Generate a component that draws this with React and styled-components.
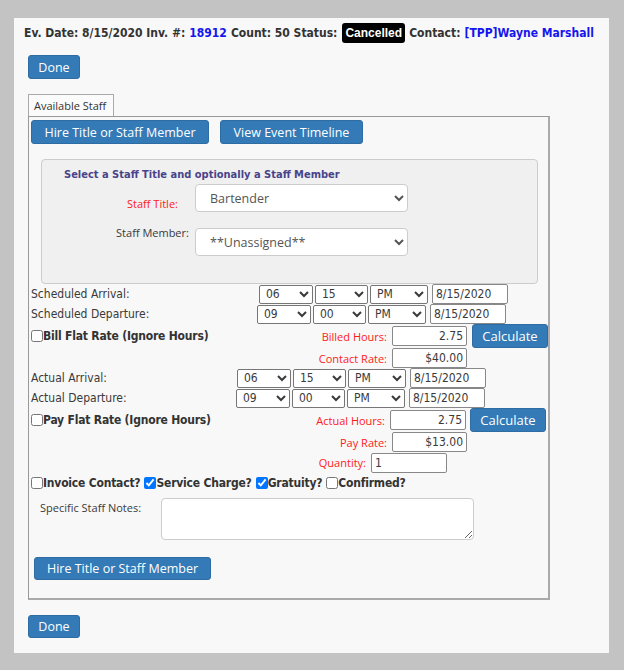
import React from 'react'
import styled, { createGlobalStyle } from 'styled-components'

const GlobalStyle = createGlobalStyle`
  html, body {
    margin: 0;
    padding: 0;
    background: #c3c3c3;
  }
  body {
    font-family: "DejaVu Sans Condensed", "DejaVu Sans", sans-serif;
    font-size: 12px;
    color: #3a3a3a;
  }
`

const Page = styled.div`
  margin: 18px 15px 18px 14px;
  background: #f8f8f8;
  padding: 8px 14px 14px 14px;
`

const Header = styled.div`
  font-weight: bold;
  color: #333;
  font-size: 12px;
  height: 14px;
  line-height: 14px;
  margin-left: -4px;
  display: flex;
  align-items: center;
  white-space: nowrap;
`

const LinkText = styled.a`
  color: #1515ee;
  text-decoration: none;
  margin: 0 4px;
`

const StatusBadge = styled.span`
  background: #000;
  color: #fff;
  border-radius: 3px;
  padding: 3px 3px;
  margin: 0 4px 0 5px;
  font-family: "Liberation Sans", Arial, sans-serif;
  font-size: 12px;
`

const Button = styled.button`
  background: #337ab7;
  border: 1px solid #2e6da4;
  border-radius: 3px;
  color: #fff;
  font-family: "Open Sans", sans-serif;
  font-size: ${({ $size }) => $size || 12.5}px;
  height: ${({ $h }) => $h || 24}px;
  width: ${({ $w }) => ($w ? `${$w}px` : 'auto')};
  margin-left: ${({ $ml }) => $ml || 0}px;
  padding: 0;
  cursor: pointer;
  flex: none;
`

const DoneRow = styled.div`
  margin-top: ${({ $top }) => $top}px;
  height: 24px;
`

const Tab = styled.div`
  margin-top: 15px;
  width: 86px;
  height: 22px;
  box-sizing: border-box;
  border: 1px solid #aaa;
  border-bottom: none;
  background: #fbfbfb;
  font-family: "Open Sans", sans-serif;
  font-size: 11px;
  line-height: 21px;
  padding-left: 5px;
  color: #333;
`

const TabPanel = styled.div`
  width: 522px;
  box-sizing: border-box;
  border: 1px solid #999;
  border-right: 2px solid #aaa;
  border-bottom: 2px solid #aaa;
  padding: 3px 2px 18px 2px;
`

const ButtonBar = styled.div`
  display: flex;
  gap: 11px;
`

const StaffBox = styled.div`
  margin: 15px 0 0 10px;
  width: 497px;
  height: 125px;
  box-sizing: border-box;
  background: #f0f0f0;
  border: 1px solid #ccc;
  border-radius: 4px;
  padding: 8px 0 0 0;
`

const BoxTitle = styled.div`
  font-weight: bold;
  color: #48448a;
  font-size: 11px;
  padding-left: 22px;
  height: 14px;
`

const BoxRow = styled.div`
  display: flex;
  align-items: flex-start;
  margin-top: ${({ $top }) => $top}px;
  padding-left: 70px;
`

const BoxLabel = styled.div`
  width: 81px;
  text-align: center;
  margin-right: 2px;
  margin-top: ${({ $mt }) => $mt}px;
  line-height: 14px;
  font-family: "Open Sans", sans-serif;
  font-size: 11px;
  color: ${({ $red }) => ($red ? '#ff1a1a' : '#3a3a3a')};
`

const BigSelect = styled.select`
  width: 213px;
  height: 28px;
  border: 1px solid #ccc;
  border-radius: 4px;
  background: #fff;
  padding: 0 10px;
  font-family: "Open Sans", sans-serif;
  font-size: 12.5px;
  color: #555;
`

const Row = styled.div`
  display: flex;
  align-items: center;
  height: ${({ $h }) => $h || 20}px;
`

const Cell = styled.div`
  width: ${({ $w }) => $w}px;
  flex: none;
  display: flex;
  align-items: center;
  justify-content: ${({ $justify }) => $justify || 'flex-start'};
  white-space: nowrap;
  color: #3a3a3a;
`

const RedLabel = styled.span`
  color: #ff1a1a;
  font-family: "Open Sans", sans-serif;
  font-size: 11px;
`

const CheckLabel = styled.label`
  display: flex;
  align-items: center;
  font-weight: bold;
  font-size: 12px;
  letter-spacing: -0.2px;
  color: #333;
  white-space: nowrap;
  margin-right: ${({ $mr }) => $mr || 0}px;
`

const Check = styled.input.attrs({ type: 'checkbox' })`
  margin: 0;
  width: 12px;
  height: 12px;
`

const TimeSelect = styled.select`
  width: ${({ $w }) => $w}px;
  height: 19px;
  margin-right: ${({ $mr }) => $mr}px;
  border: 1px solid #767676;
  border-radius: 2px;
  background: #fff;
  padding: 0 0 0 2px;
  font-family: "DejaVu Sans Condensed", "DejaVu Sans", sans-serif;
  font-size: 12px;
  color: #3a3a3a;
`

const TextBox = styled.input`
  width: ${({ $w }) => $w || 76}px;
  height: 20px;
  box-sizing: border-box;
  border: 1px solid #888;
  border-radius: 2px;
  background: #fff;
  padding: 0 3px;
  font-family: "DejaVu Sans Condensed", "DejaVu Sans", sans-serif;
  font-size: 12px;
  color: #3a3a3a;
  text-align: ${({ $right }) => ($right ? 'right' : 'left')};
  margin-left: ${({ $ml }) => $ml || 0}px;
`

const NotesRow = styled.div`
  display: flex;
  margin-top: 5px;
`

const NotesLabel = styled.div`
  width: 121px;
  flex: none;
  padding: 2px 0 0 9px;
  font-family: "Open Sans", sans-serif;
  font-size: 11px;
  color: #3a3a3a;
`

const Notes = styled.textarea`
  width: 313px;
  height: 42px;
  box-sizing: border-box;
  border: 1px solid #ccc;
  border-radius: 4px;
  background: #fff;
`

const FooterBar = styled.div`
  margin: 17px 0 0 3px;
  height: 23px;
`

const hours = ['01', '02', '03', '04', '05', '06', '07', '08', '09', '10', '11', '12']
const minutes = ['00', '15', '30', '45']

const TimeFields = ({ h, m, date }) => (
  <>
    <TimeSelect $w={54} $mr={2} defaultValue={h}>
      {hours.map((x) => <option key={x}>{x}</option>)}
    </TimeSelect>
    <TimeSelect $w={53} $mr={2} defaultValue={m}>
      {minutes.map((x) => <option key={x}>{x}</option>)}
    </TimeSelect>
    <TimeSelect $w={58} $mr={4} defaultValue="PM">
      <option>AM</option>
      <option>PM</option>
    </TimeSelect>
    <TextBox defaultValue={date} />
  </>
)

const App = () => {
  return (
    <Page>
      <GlobalStyle />
      <Header>
        Ev. Date: 8/15/2020 Inv. #:<LinkText>18912</LinkText>Count: 50 Status:
        <StatusBadge>Cancelled</StatusBadge>
        Contact:<LinkText>[TPP]Wayne Marshall</LinkText>
      </Header>
      <DoneRow $top={15}>
        <Button $w={52}>Done</Button>
      </DoneRow>

      <Tab>Available Staff</Tab>
      <TabPanel>
        <ButtonBar>
          <Button $w={178}>Hire Title or Staff Member</Button>
          <Button $w={143}>View Event Timeline</Button>
        </ButtonBar>

        <StaffBox>
          <BoxTitle>Select a Staff Title and optionally a Staff Member</BoxTitle>
          <BoxRow $top={2}>
            <BoxLabel $red $mt={13}>Staff Title:</BoxLabel>
            <BigSelect defaultValue="Bartender">
              <option>Bartender</option>
              <option>Server</option>
              <option>Captain</option>
            </BigSelect>
          </BoxRow>
          <BoxRow $top={16}>
            <BoxLabel $mt={-2}>Staff Member:</BoxLabel>
            <BigSelect defaultValue="**Unassigned**">
              <option>**Unassigned**</option>
            </BigSelect>
          </BoxRow>
        </StaffBox>

        <Row>
          <Cell $w={228}>Scheduled Arrival:</Cell>
          <TimeFields h="06" m="15" date="8/15/2020" />
        </Row>
        <Row>
          <Cell $w={226}>Scheduled Departure:</Cell>
          <TimeFields h="09" m="00" date="8/15/2020" />
        </Row>
        <Row $h={24}>
          <Cell $w={356} $justify="space-between">
            <CheckLabel><Check />Bill Flat Rate (Ignore Hours)</CheckLabel>
            <RedLabel>Billed Hours:</RedLabel>
          </Cell>
          <TextBox $ml={5} $w={75} $right defaultValue="2.75" />
          <Button $w={76} $size={13} $ml={5}>Calculate</Button>
        </Row>
        <Row>
          <Cell $w={356} $justify="flex-end">
            <RedLabel>Contact Rate:</RedLabel>
          </Cell>
          <TextBox $ml={5} $w={75} $right defaultValue="$40.00" />
        </Row>
        <Row>
          <Cell $w={206}>Actual Arrival:</Cell>
          <TimeFields h="06" m="15" date="8/15/2020" />
        </Row>
        <Row>
          <Cell $w={205}>Actual Departure:</Cell>
          <TimeFields h="09" m="00" date="8/15/2020" />
        </Row>
        <Row $h={24}>
          <Cell $w={354} $justify="space-between">
            <CheckLabel><Check />Pay Flat Rate (Ignore Hours)</CheckLabel>
            <RedLabel>Actual Hours:</RedLabel>
          </Cell>
          <TextBox $ml={5} $w={76} $right defaultValue="2.75" />
          <Button $w={76} $size={13} $ml={4}>Calculate</Button>
        </Row>
        <Row>
          <Cell $w={356} $justify="flex-end">
            <RedLabel>Pay Rate:</RedLabel>
          </Cell>
          <TextBox $ml={5} $w={75} $right defaultValue="$13.00" />
        </Row>
        <Row $h={21}>
          <Cell $w={335} $justify="flex-end">
            <RedLabel>Quantity:</RedLabel>
          </Cell>
          <TextBox $ml={5} $w={76} defaultValue="1" />
        </Row>
        <Row $h={20}>
          <CheckLabel $mr={4}><Check />Invoice Contact?</CheckLabel>
          <CheckLabel $mr={4}><Check defaultChecked />Service Charge?</CheckLabel>
          <CheckLabel $mr={4}><Check defaultChecked />Gratuity?</CheckLabel>
          <CheckLabel><Check />Confirmed?</CheckLabel>
        </Row>
        <NotesRow>
          <NotesLabel>Specific Staff Notes:</NotesLabel>
          <Notes />
        </NotesRow>
        <FooterBar>
          <Button $w={177} $h={23}>Hire Title or Staff Member</Button>
        </FooterBar>
      </TabPanel>

      <DoneRow $top={15}>
        <Button $w={52} $h={23}>Done</Button>
      </DoneRow>
    </Page>
  )
}

export default App
